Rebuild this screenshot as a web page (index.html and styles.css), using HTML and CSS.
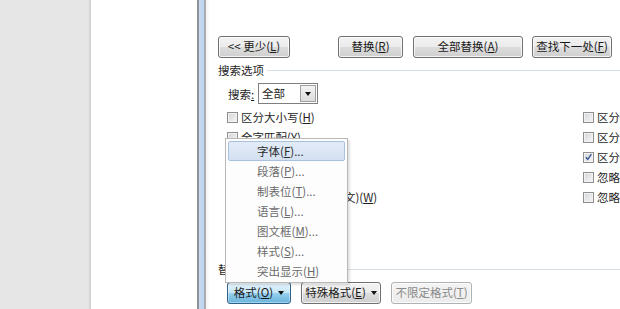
FILE: index.html
```html
<!DOCTYPE html>
<html lang="zh-CN">
<head>
    <meta charset="UTF-8">
    <title>查找和替换</title>
    <link rel="stylesheet" href="styles.css">
</head>
<body>
    <div class="screen">
        <div class="side-panel"></div>
        <div class="page-area"></div>
        <div class="frame"></div>

        <div class="dialog">
            <div class="top-buttons">
                <button class="btn btn-less">&lt;&lt; 更少(<u>L</u>)</button>
                <button class="btn btn-replace">替换(<u>R</u>)</button>
                <button class="btn btn-replace-all">全部替换(<u>A</u>)</button>
                <button class="btn btn-next">查找下一处(<u>F</u>)</button>
            </div>

            <div class="group-title">
                <span>搜索选项</span>
                <div class="rule"></div>
            </div>

            <div class="search-row">
                <span class="search-label">搜索<u>:</u></span>
                <div class="select">
                    <span class="select-value">全部</span>
                    <span class="select-btn"><span class="tri"></span></span>
                </div>
            </div>

            <div class="options">
                <div class="opt"><span class="box"></span>区分大小写(<u>H</u>)</div>
                <div class="opt"><span class="box"></span>区分前缀(<u>X</u>)</div>
                <div class="opt"><span class="box"></span>全字匹配(<u>Y</u>)</div>
                <div class="opt"><span class="box"></span>区分后缀(<u>T</u>)</div>
                <div class="opt"><span class="box"></span>使用通配符(<u>U</u>)</div>
                <div class="opt"><span class="box checked"><svg viewBox="0 0 10 10" width="10" height="10"><path d="M2 5.2 L4.2 7.6 L8.2 1.8" fill="none" stroke="#3d5698" stroke-width="1.6"/></svg></span>区分全/半角(<u>M</u>)</div>
                <div class="opt"><span class="box"></span>同音(英文)(<u>K</u>)</div>
                <div class="opt"><span class="box"></span>忽略标点符号(<u>S</u>)</div>
                <div class="opt"><span class="box"></span><span class="long-label">查找单词的所有形式(英文)(<u>W</u>)</span></div>
                <div class="opt"><span class="box"></span>忽略空格(<u>W</u>)</div>
            </div>

            <div class="group-title replace-title">
                <span>替换</span>
                <div class="rule"></div>
            </div>

            <div class="bottom-buttons">
                <button class="btn btn-format pressed">格式(<u>O</u>) <span class="arrow"></span></button>
                <button class="btn btn-special">特殊格式(<u>E</u>) <span class="arrow"></span></button>
                <button class="btn btn-noformat" disabled>不限定格式(<u>T</u>)</button>
            </div>

            <div class="menu">
                <div class="menu-item active">字体(<u>F</u>)...</div>
                <div class="menu-item">段落(<u>P</u>)...</div>
                <div class="menu-item">制表位(<u>T</u>)...</div>
                <div class="menu-item">语言(<u>L</u>)...</div>
                <div class="menu-item">图文框(<u>M</u>)...</div>
                <div class="menu-item">样式(<u>S</u>)...</div>
                <div class="menu-item">突出显示(<u>H</u>)</div>
            </div>
        </div>
    </div>
</body>
</html>
```

FILE: styles.css
```css
* {
    margin: 0;
    padding: 0;
    box-sizing: border-box;
}

body {
    font-family: "Noto Sans CJK SC", "Noto Sans", sans-serif;
    font-size: 11.5px;
    color: #1e1e1e;
    background: #fff;
    overflow: hidden;
}

u {
    text-decoration: underline;
    text-underline-offset: 1px;
}

.screen {
    display: flex;
    width: 620px;
    height: 309px;
    overflow: hidden;
}

.side-panel {
    width: 91px;
    flex-shrink: 0;
    background: #e6e6e6;
    border-right: 2px solid #d3d3d3;
}

.page-area {
    width: 106px;
    flex-shrink: 0;
    background: #fff;
}

.frame {
    width: 13px;
    flex-shrink: 0;
    background: linear-gradient(90deg,
        #8e9196 0, #8e9196 2px,
        #c9dcf1 2px, #bcd3ee 7px,
        #a9adb3 7px, #a9adb3 9px,
        #f4f4f4 9px, #fff 13px);
}

.dialog {
    position: relative;
    flex: 1;
    min-width: 410px;
    padding: 36px 0 0 8px;
    background: #fff;
}

/* buttons */
.btn {
    height: 22px;
    font-family: inherit;
    font-size: 11.5px;
    color: #1a1a1a;
    border: 1px solid #707070;
    border-radius: 3px;
    background: linear-gradient(#f3f3f3 0, #ebebeb 50%, #dddddd 50%, #cfcfcf 100%);
    box-shadow: inset 0 0 0 1px rgba(255,255,255,0.75);
    display: inline-flex;
    align-items: center;
    justify-content: center;
    line-height: 1;
}

.btn.pressed {
    border-color: #2c628b;
    background: linear-gradient(#e5f4fc 0, #c4e5f6 50%, #98d1ef 50%, #68b3db 100%);
    box-shadow: inset 0 0 0 1px rgba(255,255,255,0.4);
}

.btn:disabled {
    color: #8a8a8a;
    border-color: #adb2b5;
    background: linear-gradient(#f4f4f4, #ececec);
}

.top-buttons {
    display: flex;
}

.btn-less { width: 72px; }
.btn-replace { width: 65px; margin-left: 48px; }
.btn-replace-all { width: 110px; margin-left: 10px; }
.btn-next { width: 80px; margin-left: 9px; }

.arrow {
    display: inline-block;
    width: 0;
    height: 0;
    margin-left: 5px;
    border-left: 3.5px solid transparent;
    border-right: 3.5px solid transparent;
    border-top: 4px solid #111;
}

/* group titles */
.group-title {
    display: flex;
    align-items: center;
    height: 16px;
    margin-top: 4px;
    line-height: 16px;
}

.group-title .rule {
    flex: 1;
    height: 1px;
    margin-left: 3px;
    background: #d5dfe5;
}

.replace-title {
    margin-top: 54px;
}

/* search row */
.search-row {
    display: flex;
    align-items: center;
    height: 21px;
    margin-top: 5px;
    padding-left: 10px;
}

.search-label {
    width: 30px;
}

.select {
    display: flex;
    width: 60px;
    height: 21px;
    border: 1px solid #7f7f7f;
    background: #fff;
}

.select-value {
    flex: 1;
    padding-left: 3px;
    line-height: 19px;
}

.select-btn {
    width: 16px;
    margin: 1px;
    display: flex;
    align-items: center;
    justify-content: center;
    border: 1px solid #a0a0a0;
    background: linear-gradient(#f4f4f4, #dcdcdc);
}

.tri {
    width: 0;
    height: 0;
    border-left: 3.5px solid transparent;
    border-right: 3.5px solid transparent;
    border-top: 4px solid #111;
}

/* options */
.options {
    display: grid;
    grid-template-columns: 356px 1fr;
    margin-top: 3px;
    padding-left: 9px;
}

.opt {
    display: flex;
    align-items: center;
    height: 20px;
    white-space: nowrap;
}

/* the long label runs under the open menu */
.long-label {
    margin-left: -16px;
}

.box {
    width: 11px;
    height: 11px;
    margin-right: 3px;
    flex-shrink: 0;
    border: 1px solid #8f8f8f;
    background: linear-gradient(135deg, #d2d4d8, #f7f7f7);
    box-shadow: inset 0 0 0 1px #f2f2f2;
    display: flex;
    align-items: center;
    justify-content: center;
}

.box svg {
    display: block;
}

/* bottom */
.bottom-buttons {
    display: flex;
    gap: 10px;
    margin-top: 5px;
    padding-left: 9px;
}

.btn-format { width: 64px; }
.btn-special { width: 80px; }
.btn-noformat { width: 81px; }

/* dropdown menu */
.menu {
    position: absolute;
    left: 15px;
    top: 138px;
    width: 123px;
    height: 145px;
    padding: 2px;
    background: #fdfdfd;
    border: 1px solid #b8b8b8;
    box-shadow: 2px 2px 2px rgba(0,0,0,0.12);
}

.menu-item {
    height: 20px;
    line-height: 18px;
    padding-left: 28px;
    color: #6a6a6a;
    border: 1px solid transparent;
    border-radius: 2px;
}

.menu-item.active {
    color: #2a2a2a;
    background: linear-gradient(#e3ebf7, #d4e1f3);
    border-color: #a9c0df;
}
```
